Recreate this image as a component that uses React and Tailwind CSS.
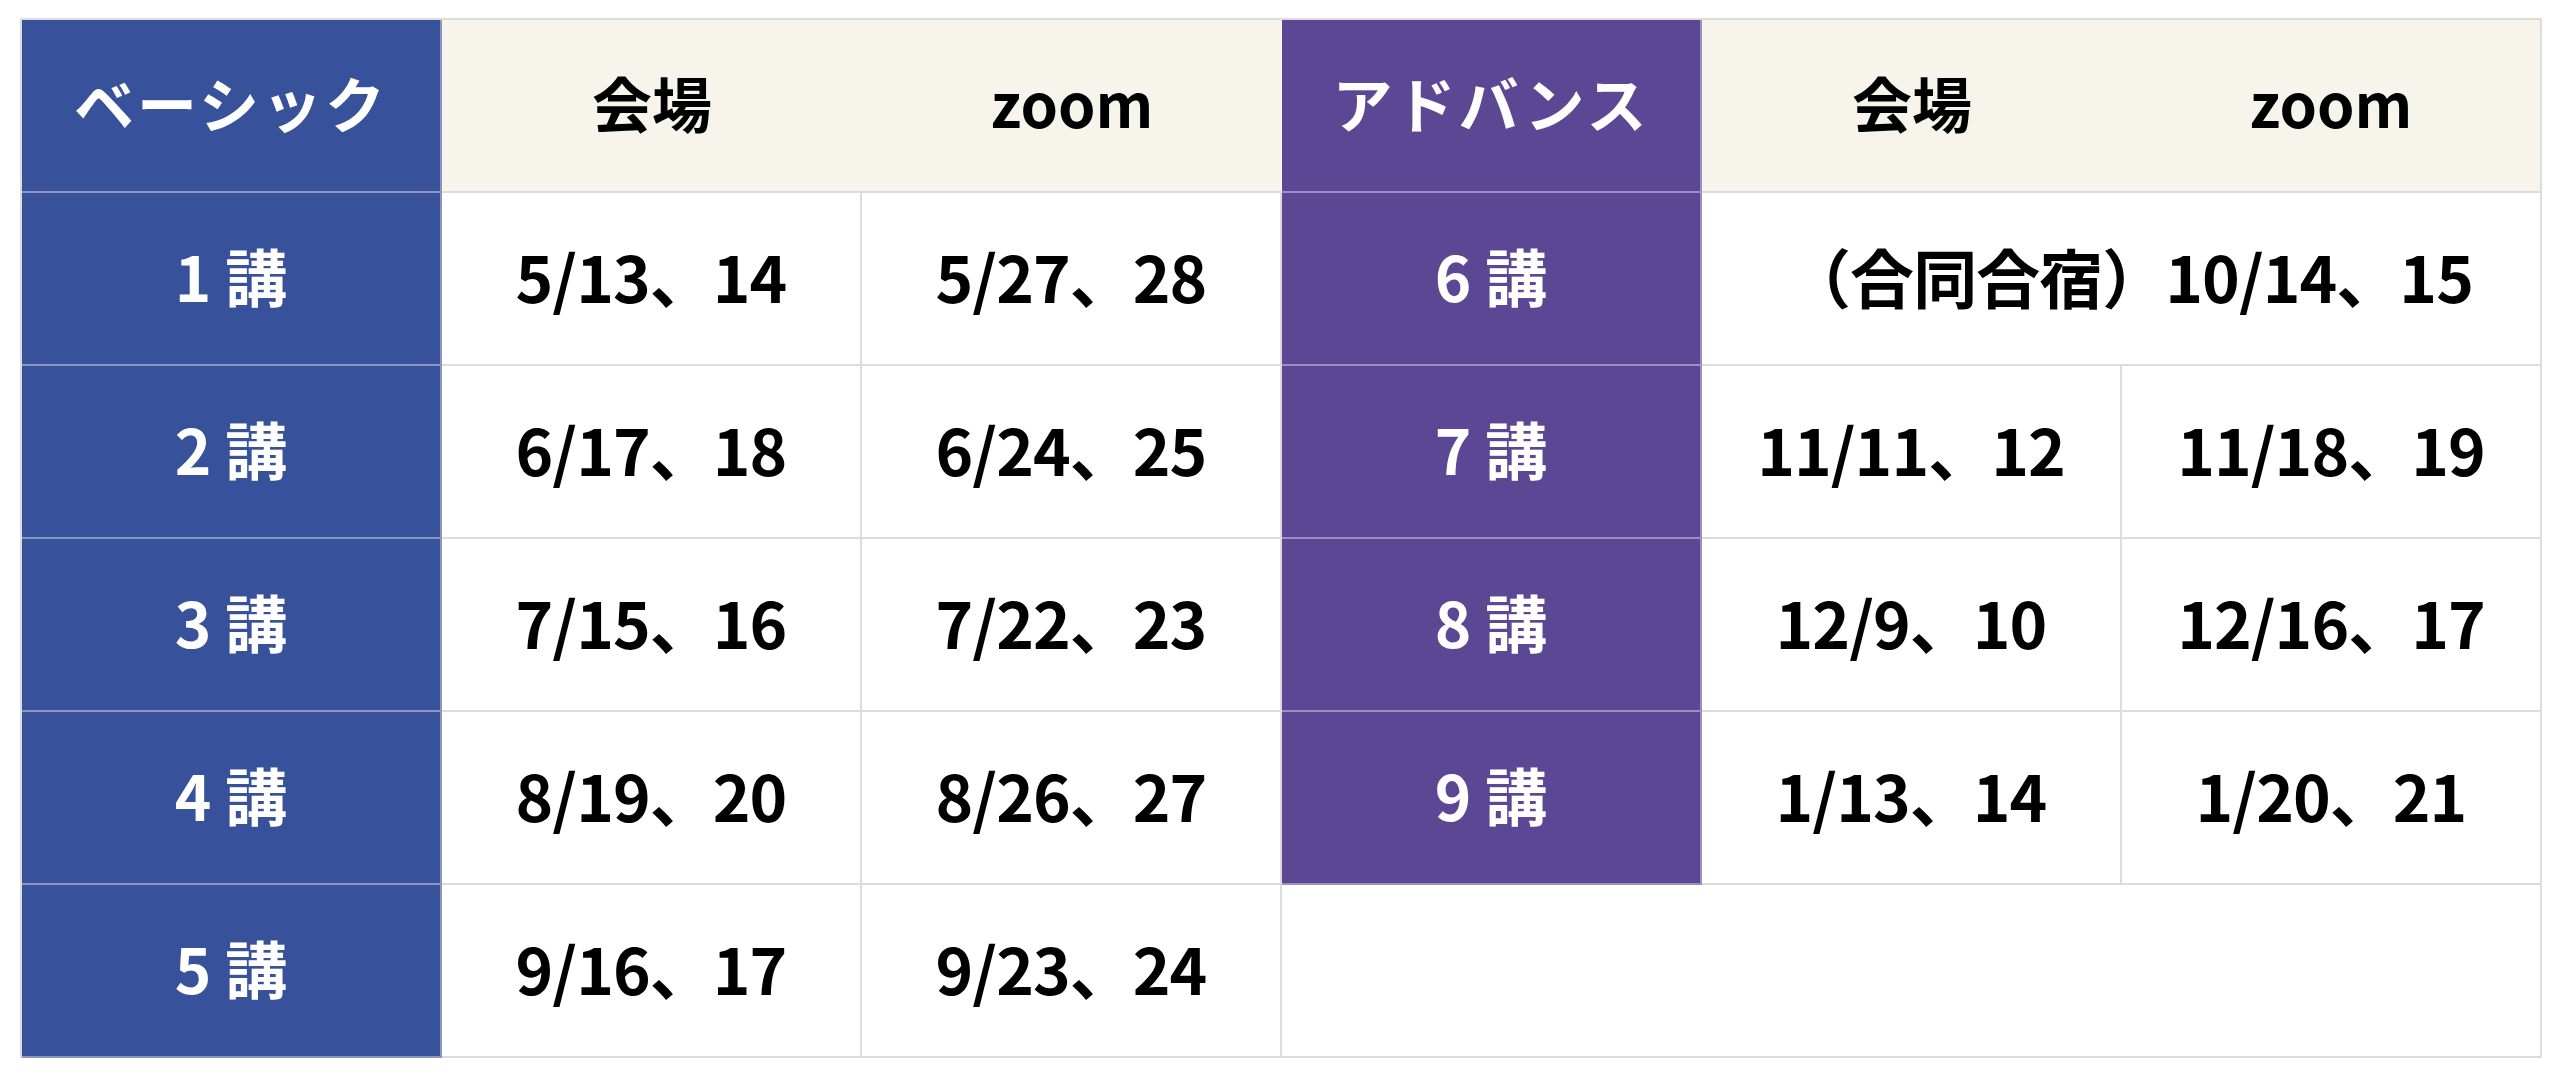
const basic = [
  ['1 講', '5/13、14', '5/27、28'],
  ['2 講', '6/17、18', '6/24、25'],
  ['3 講', '7/15、16', '7/22、23'],
  ['4 講', '8/19、20', '8/26、27'],
  ['5 講', '9/16、17', '9/23、24'],
];

const advance = [
  ['6 講', '（合同合宿）10/14、15', null],
  ['7 講', '11/11、12', '11/18、19'],
  ['8 講', '12/9、10', '12/16、17'],
  ['9 講', '1/13、14', '1/20、21'],
];

const cell = 'flex items-center justify-center pb-[8px] border-r-2 border-b-2';
const data = `${cell} border-[#dcdcdc] text-[64px] tracking-[-0.015em]`;

export default function App() {
  return (
    <div className="min-h-screen bg-white pt-[18px] pl-[20px]" style={{ fontFamily: '"Noto Sans CJK JP", "Noto Sans", sans-serif' }}>
      <div className="grid w-[2522px] grid-cols-[repeat(6,420px)] grid-rows-[repeat(6,173px)] border-t-2 border-l-2 border-[#dcdcdc] text-[60px] font-bold leading-none text-black">
        {/* header */}
        <div className={`${cell} border-[#8c95bd] bg-[#37519a] text-white tracking-[0.05em]`}>ベーシック</div>
        <div className="flex items-center justify-center pb-[8px] border-b-2 border-[#dcdcdc] bg-[#f7f5eb]">会場</div>
        <div className="flex items-center justify-center pb-[8px] border-b-2 border-[#dcdcdc] bg-[#f7f5eb]">zoom</div>
        <div className={`${cell} border-[#9b8fbd] bg-[#5c4795] text-white tracking-[0.05em]`}>アドバンス</div>
        <div className="flex items-center justify-center pb-[8px] border-b-2 border-[#dcdcdc] bg-[#f7f5eb]">会場</div>
        <div className={`${cell} border-[#dcdcdc] bg-[#f7f5eb]`}>zoom</div>

        {basic.map((b, i) => {
          const a = advance[i];
          return [
            <div key={`b0${i}`} className={`${cell} border-[#8c95bd] bg-[#37519a] text-white text-[62px]`}>{b[0]}</div>,
            <div key={`b1${i}`} className={data}>{b[1]}</div>,
            <div key={`b2${i}`} className={data}>{b[2]}</div>,
            a ? (
              [
                <div key={`a0${i}`} className={`${cell} border-[#9b8fbd] bg-[#5c4795] text-white text-[62px]`}>{a[0]}</div>,
                a[2] === null ? (
                  <div key={`a1${i}`} className={`${data} col-span-2 pl-[18px]`}>{a[1]}</div>
                ) : (
                  [
                    <div key={`a1${i}`} className={data}>{a[1]}</div>,
                    <div key={`a2${i}`} className={data}>{a[2]}</div>,
                  ]
                ),
              ]
            ) : (
              <div key={`e${i}`} className={`${cell} col-span-3 border-[#dcdcdc]`} />
            ),
          ];
        })}
      </div>
    </div>
  );
}
